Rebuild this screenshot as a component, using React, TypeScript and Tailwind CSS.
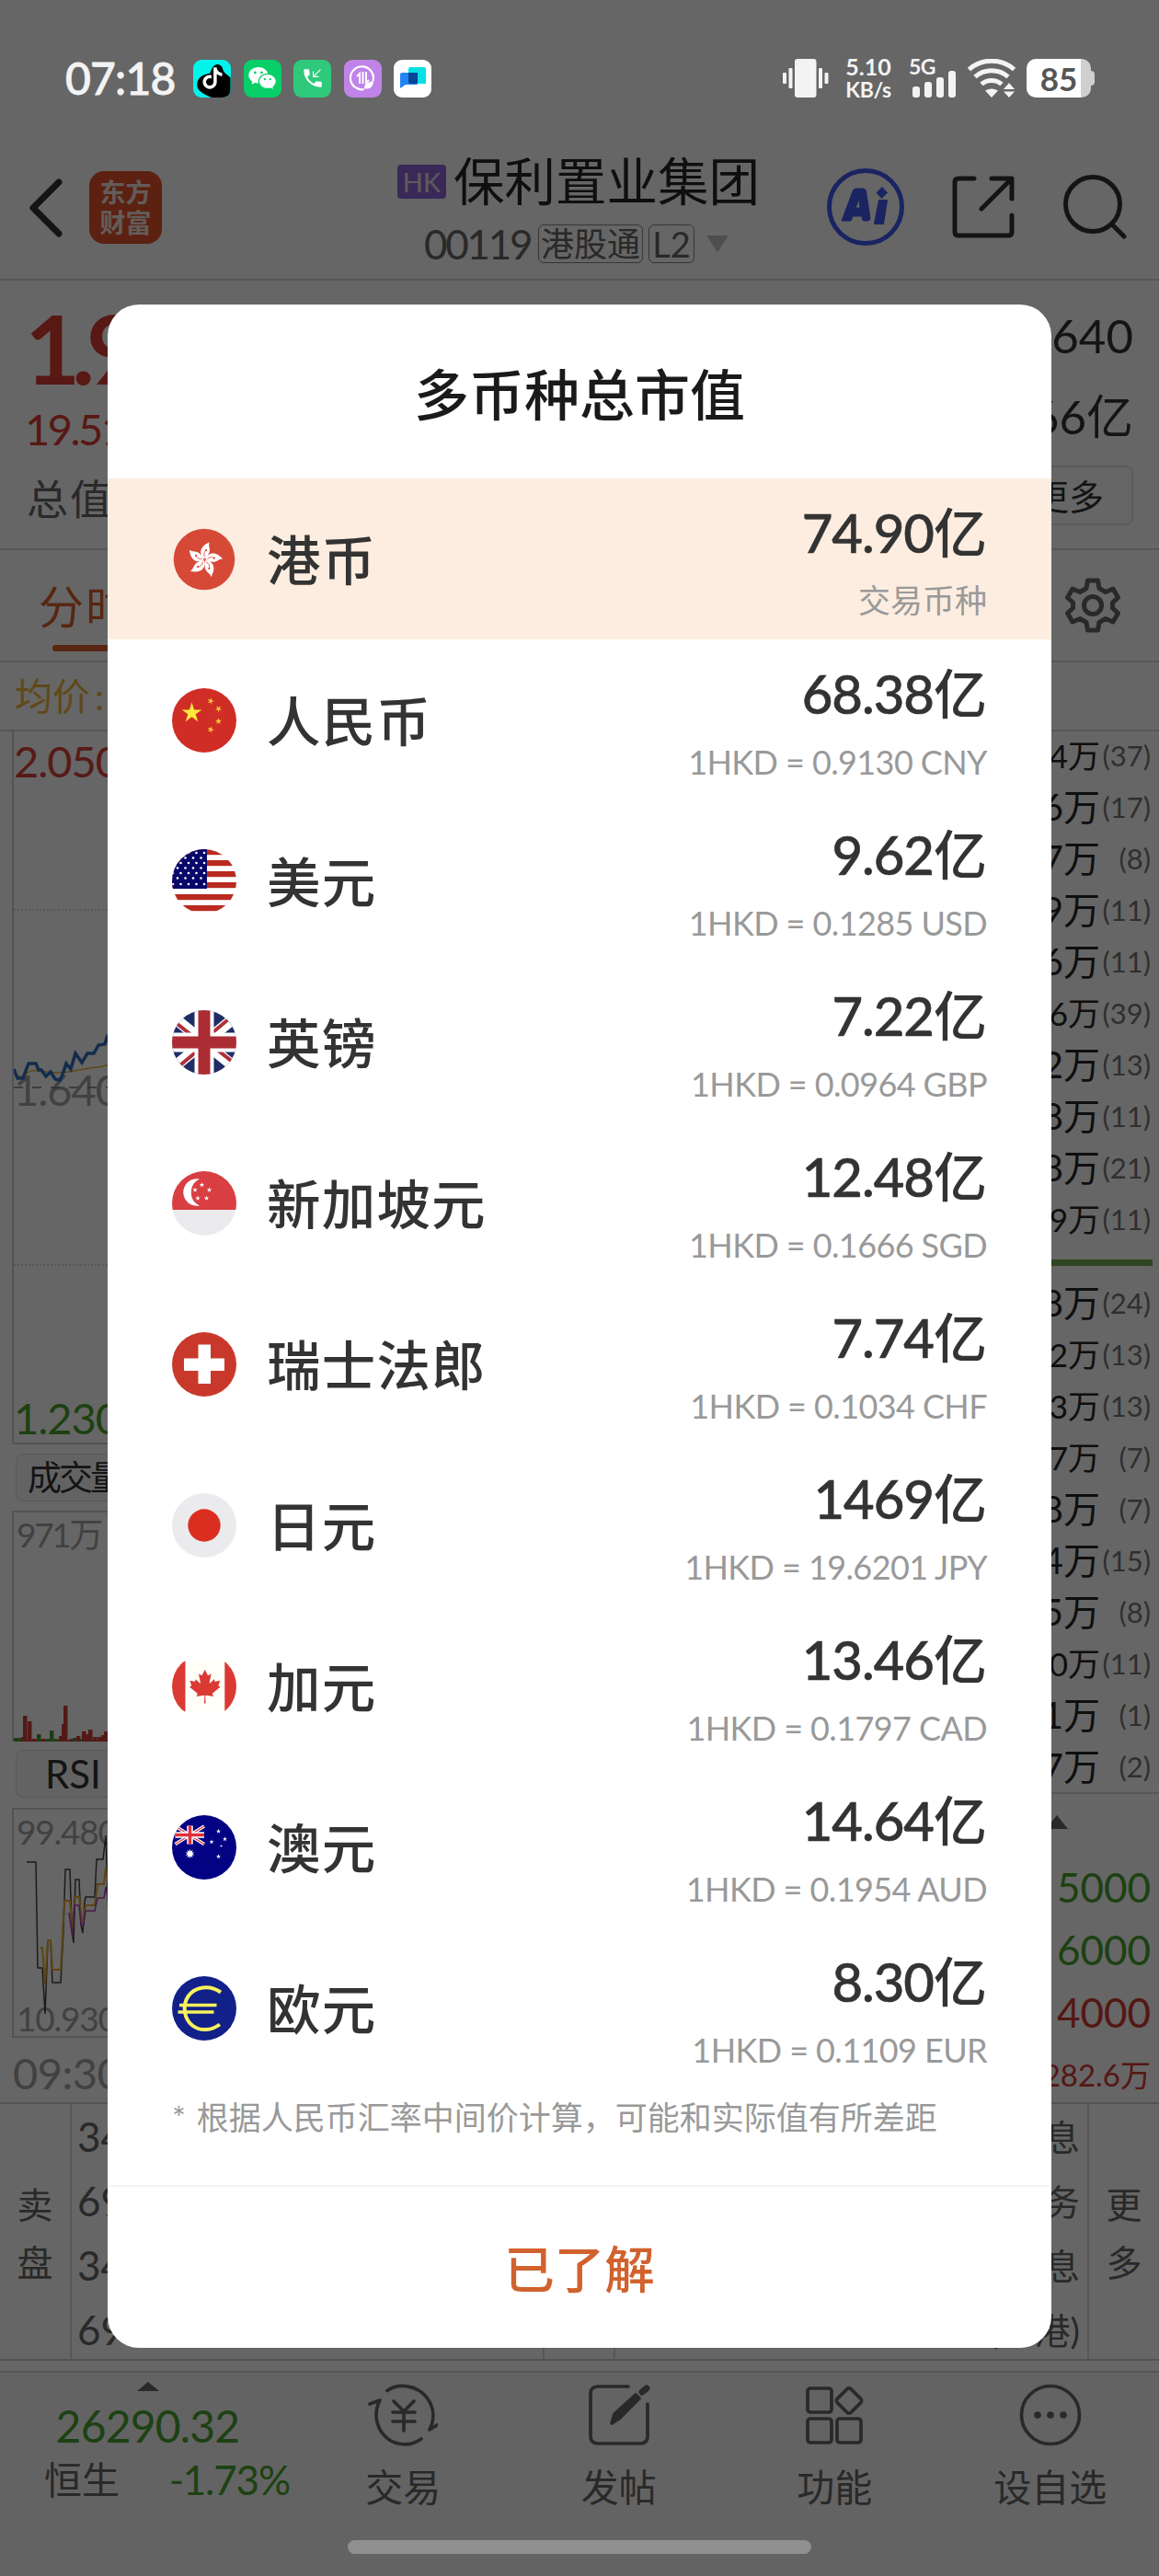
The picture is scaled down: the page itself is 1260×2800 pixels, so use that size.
import type { ReactNode } from "react";
import { RiTiktokFill, RiWechatFill } from "react-icons/ri";
import { MdPhoneCallback } from "react-icons/md";

const STAR = "M0-10 2.25-3.1H9.5L3.63 1.18 5.88 8.1 0 3.8-5.88 8.1-3.63 1.18-9.5-3.1H-2.25Z";

function Star({ x, y, r, rotate = 0, fill = "#fff" }: { x: number; y: number; r: number; rotate?: number; fill?: string }) {
  return <path d={STAR} fill={fill} transform={`translate(${x} ${y}) rotate(${rotate}) scale(${r / 10})`} />;
}

function Flag({ id, children }: { id: string; children: ReactNode }) {
  return (
    <svg viewBox="0 0 70 70" className="size-[70px] shrink-0">
      <clipPath id={`flag-${id}`}>
        <circle cx="35" cy="35" r="35" />
      </clipPath>
      <g clipPath={`url(#flag-${id})`}>{children}</g>
    </svg>
  );
}

function UnionJack() {
  return (
    <>
      <rect width="70" height="70" fill="#1f2d64" />
      <path d="M-2 5 72 65M72 5-2 65" stroke="#fff" strokeWidth="12" />
      <path d="M-2 9 35 38M72 1 35 32M-2 69 35 38M72 61 35 32" stroke="#b0303a" strokeWidth="4" />
      <path d="M35 0V70M0 35H70" stroke="#fff" strokeWidth="21" />
      <path d="M35 0V70M0 35H70" stroke="#ab2c33" strokeWidth="13" />
    </>
  );
}

const flags: Record<string, ReactNode> = {
  HKD: (
    <>
      <circle cx="35" cy="35" r="33.3" fill="#d64937" />
      {[0, 72, 144, 216, 288].map((a) => (
        <g key={a} transform={`translate(35.5 35.5) rotate(${a + 4})`}>
          <path d="M0-1C-7-5-7-14 4-19.500 2-15 7-12 3.500-6 3-3 1-2 0-1Z" fill="#fff" />
          <path d="M0-3C-2-6-1-9 1-11" stroke="#d64937" strokeWidth="0.800" fill="none" />
          <circle cx="0.800" cy="-10.500" r="1.100" fill="#d64937" />
        </g>
      ))}
    </>
  ),
  CNY: (
    <>
      <rect width="70" height="70" fill="#d02d27" />
      <Star x={21.500} y={27} r={11.500} fill="#ffe83b" />
      <Star x={42} y={14} r={3.800} rotate={20} fill="#f9c832" />
      <Star x={50.500} y={22.500} r={3.800} rotate={40} fill="#f9c832" />
      <Star x={50.500} y={36} r={3.800} fill="#f9c832" />
      <Star x={42} y={45} r={3.800} rotate={20} fill="#f9c832" />
    </>
  ),
  USD: (
    <>
      <rect width="70" height="70" fill="#fff" />
      {[0, 12, 24, 36, 49, 61].map((y) => (
        <rect key={y} y={y} width="70" height="6.200" fill="#b92a20" />
      ))}
      <rect width="38" height="43" fill="#08086b" />
      {[4, 9.500, 15, 20.500, 26, 31.500, 38].map((y, i) =>
        [2, 10.500, 19, 27.500, 36].map((x) => (
          <circle key={`${x}-${y}`} cx={x - (i % 2 ? 4.500 : 1)} cy={y} r="1.300" fill="#fff" />
        ))
      )}
    </>
  ),
  GBP: <UnionJack />,
  SGD: (
    <>
      <rect width="70" height="70" fill="#ebebed" />
      <rect width="70" height="42" fill="#d93f42" />
      <path d="M30 8.500A14.800 14.800 0 1 0 30 37.500 16 16 0 0 1 30 8.500Z" fill="#fff" />
      <Star x={32.500} y={15} r={2.900} />
      <Star x={25} y={20.500} r={2.900} />
      <Star x={40.500} y={20.500} r={2.900} />
      <Star x={28} y={29.500} r={2.900} />
      <Star x={37.500} y={29.500} r={2.900} />
    </>
  ),
  CHF: (
    <>
      <rect width="70" height="70" fill="#c9392b" />
      <path d="M28.500 13.500h13.500v15h15v13.500h-15v14h-13.500v-14h-15.500v-13.500h15.500Z" fill="#fff" />
    </>
  ),
  JPY: (
    <>
      <rect width="70" height="70" fill="#ebebee" />
      <circle cx="35" cy="35" r="17.700" fill="#da2f20" />
    </>
  ),
  CAD: (
    <>
      <rect y="7.500" width="70" height="55" fill="#fffff8" />
      <rect y="7.500" width="14.500" height="55" fill="#db3a34" />
      <rect x="57.300" y="7.500" width="13" height="55" fill="#db3a34" />
      <path
        transform="translate(35.800 35) scale(.0091)"
        fill="#db3a34"
        d="m-90 2030 45-863a95 95 0 0 0-111-98l-859 151 116-320a65 65 0 0 0-20-73l-941-762 212-99a65 65 0 0 0 34-79l-186-572 542 115a65 65 0 0 0 73-38l105-247 423 454a65 65 0 0 0 111-57l-204-1052 327 189a65 65 0 0 0 91-27l332-652 332 652a65 65 0 0 0 91 27l327-189-204 1052a65 65 0 0 0 111 57l423-454 105 247a65 65 0 0 0 73 38l542-115-186 572a65 65 0 0 0 34 79l212 99-941 762a65 65 0 0 0-20 73l116 320-859-151a95 95 0 0 0-111 98l45 863z"
      />
    </>
  ),
  AUD: (
    <>
      <rect width="70" height="70" fill="#020283" />
      <path d="M3.500 12 35 31.500M35 12 3.500 31.500" stroke="#fff" strokeWidth="3.600" />
      <path d="M3.500 12 35 31.500M35 12 3.500 31.500" stroke="#e03a3a" strokeWidth="1.400" />
      <path d="M19.500 11.500V31.500M3.500 21.500H35" stroke="#fff" strokeWidth="6.500" />
      <path d="M19.500 11.500V31.500M3.500 21.500H35" stroke="#e0303a" strokeWidth="3.500" />
      <Star x={19.500} y={42} r={5.200} />
      <Star x={19.500} y={42} r={5.200} rotate={36} />
      <Star x={50.500} y={17.500} r={2.700} />
      <Star x={43} y={29} r={2.700} />
      <Star x={57.500} y={26} r={2.700} />
      <Star x={53.500} y={33.500} r={1.600} />
      <Star x={50.500} y={45} r={2.700} />
    </>
  ),
  EUR: (
    <>
      <rect width="70" height="70" fill="#12208a" />
      <path d="M53 17.500C41 9 25 11 17.500 22 11 32 13 46 22 53.500 31 60.500 43 59 52 52.500" stroke="#f8f25c" strokeWidth="4" fill="none" />
      <path d="M8 31.500H48.500M6.500 39H45.500" stroke="#f8f25c" strokeWidth="3.400" />
    </>
  ),
};

const currencies = [
  { code: "HKD", name: "港币", amount: "74.90", note: "交易币种" },
  { code: "CNY", name: "人民币", amount: "68.38", note: "1HKD = 0.9130 CNY" },
  { code: "USD", name: "美元", amount: "9.62", note: "1HKD = 0.1285 USD" },
  { code: "GBP", name: "英镑", amount: "7.22", note: "1HKD = 0.0964 GBP" },
  { code: "SGD", name: "新加坡元", amount: "12.48", note: "1HKD = 0.1666 SGD" },
  { code: "CHF", name: "瑞士法郎", amount: "7.74", note: "1HKD = 0.1034 CHF" },
  { code: "JPY", name: "日元", amount: "1469", note: "1HKD = 19.6201 JPY" },
  { code: "CAD", name: "加元", amount: "13.46", note: "1HKD = 0.1797 CAD" },
  { code: "AUD", name: "澳元", amount: "14.64", note: "1HKD = 0.1954 AUD" },
  { code: "EUR", name: "欧元", amount: "8.30", note: "1HKD = 0.1109 EUR" },
];

type Order = [volume: string, count: string, small?: boolean];

const asks: Order[] = [
  [".4万", "(37)", true],
  ["6万", "(17)"],
  ["7万", "(8)"],
  ["9万", "(11)"],
  ["6万", "(11)"],
  ["6万", "(39)", true],
  ["2万", "(13)"],
  ["8万", "(11)"],
  ["8万", "(21)"],
  ["9万", "(11)", true],
];

const bids: Order[] = [
  ["8万", "(24)"],
  ["2万", "(13)", true],
  [".3万", "(13)", true],
  [".7万", "(7)", true],
  ["8万", "(7)"],
  ["4万", "(15)"],
  ["5万", "(8)"],
  ["0万", "(11)", true],
  ["1万", "(1)"],
  ["7万", "(2)"],
];

// [x, height, up]
const volumeBars: [number, number, boolean][] = [
  [0, 4, false], [4, 4, false], [8, 5, true], [10, 28, true], [15, 22, true],
  [20, 3, true], [25, 8, false], [30, 3, true], [35, 3, false], [39, 12, false],
  [44, 3, false], [49, 6, true], [52, 19, true], [54, 39, true], [60, 3, true],
  [64, 4, false], [68, 6, true], [72, 3, false], [74, 11, true], [78, 8, true],
  [81, 13, true], [86, 5, true], [91, 5, true], [95, 7, true], [98, 11, true],
];

function StatusBar() {
  return (
    <div className="absolute inset-x-0 top-0 flex h-[170px] items-center pl-[71px] text-[#f3f3f3]">
      <span className="w-[139px] text-[48px] font-medium tracking-[-0.800px] [-webkit-text-stroke:0.800px_#f3f3f3]">07:18</span>
      <div className="flex gap-[13.500px]">
        <span className="relative flex size-[41px] items-center justify-center overflow-hidden rounded-[9px] bg-[#00f4ea]">
          <svg viewBox="0 0 41 42" className="absolute inset-0 size-full">
            <path d="M26 5c4 0 6 2 7 7 2 4 6 5 8 8v22H20C8 37 3 33 4 26c1-7 7-10 14-11 2-4 3-9 8-10Z" fill="#000" />
          </svg>
          <RiTiktokFill className="relative size-7 text-white" />
        </span>
        <span className="flex size-[41px] items-center justify-center rounded-[9px] bg-[#08cf68]">
          <RiWechatFill className="size-[32px] text-white" />
        </span>
        <span className="flex size-[41px] items-center justify-center rounded-[9px] bg-[#2fc97c]">
          <MdPhoneCallback className="size-[26px] text-white" />
        </span>
        <span className="flex size-[41px] items-center justify-center rounded-[9px] bg-[#c083e8]">
          <svg viewBox="0 0 28 28" className="size-7" fill="none" stroke="#fff" strokeWidth="2.200">
            <path d="M25.500 17A12.500 12.500 0 1 0 16 26" />
            <path d="M8 12 11 9V20M14.500 7V20M18 7V19L21 16" strokeWidth="2" />
            <path d="M16 25c0-5 4-7 10-8 0 6-4 10-10 8Z" fill="#fff" stroke="none" />
          </svg>
        </span>
        <span className="flex size-[41px] items-center justify-center rounded-[9px] bg-white">
          <svg viewBox="0 0 28 24" className="size-7">
            <path d="M11 0H26a2 2 0 0 1 2 2V18H11a2 2 0 0 1-2-2V2a2 2 0 0 1 2-2Z" fill="#05e0e4" />
            <path d="M2 6H19V18a1 1 0 0 1-1 1H6L0 23V8a2 2 0 0 1 2-2Z" fill="#2384f5" />
            <path d="M9 6H19V16a2 2 0 0 1-2 2H11a2 2 0 0 1-2-2Z" fill="#074597" />
          </svg>
        </span>
      </div>

      <svg viewBox="0 0 50 42" className="ml-[382px] h-[42px] w-[50px]" fill="#f3f3f3">
        <rect x="13" width="23.500" height="42" rx="3" />
        <rect y="15" width="4" height="12" rx="1" />
        <rect x="6.500" y="10" width="4" height="22" rx="1" />
        <rect x="39" y="10" width="4" height="22" rx="1" />
        <rect x="45.500" y="15" width="4" height="12" rx="1" />
      </svg>
      <div className="ml-[17px] flex w-[52px] flex-col items-center text-[25px] leading-[25px] font-bold">
        <span>5.10</span>
        <span className="text-[23px] tracking-[-0.300px]">KB/s</span>
      </div>
      <div className="relative ml-[19px] h-[42px] w-[50px]">
        <span className="absolute top-[-3px] left-[-1px] text-[23px] font-bold tracking-[-0.500px]">5G</span>
        <svg viewBox="0 0 50 42" className="size-full" fill="#f3f3f3">
          <rect x="3" y="30" width="8" height="12" rx="3" />
          <rect x="16" y="25" width="8" height="17" rx="3" />
          <rect x="29" y="20" width="8" height="22" rx="3" />
          <rect x="42" y="13" width="8" height="29" rx="3" />
        </svg>
      </div>
      <svg viewBox="0 0 52 42" className="ml-[13px] h-[42px] w-[52px]" fill="none" stroke="#f3f3f3" strokeWidth="5">
        <path d="M1.500 11.500C15-1 37-1 50.500 11.500" />
        <path d="M8 19.500C18 10.500 34 10.500 44 19.500" />
        <path d="M15 27.500C21 22 31 22 37 27.500" />
        <path d="M19 34.500Q26 30.500 33 34.500L26 42Z" fill="#f3f3f3" stroke="none" />
        <path d="M39 33 45 26 51 33ZM39 35.500H51L45 42Z" fill="#f3f3f3" stroke="none" />
      </svg>
      <div className="ml-[12px] flex items-center">
        <div className="flex h-[42px] w-[70px] items-center justify-center rounded-[10px] bg-[linear-gradient(90deg,#fff_84%,#d0d0d0_84%)] text-[35px] font-bold text-[#555]">
          85
        </div>
        <span className="h-4 w-1 rounded-r-sm bg-[#d0d0d0]" />
      </div>
    </div>
  );
}

function Header() {
  return (
    <div className="flex h-[305px] items-start border-b-2 border-[#d9d9d9] pt-[170px] text-[#333]">
      <svg viewBox="0 0 36 64" className="mt-[24px] ml-[32px] h-16 w-9" fill="none" stroke="#333" strokeWidth="7" strokeLinecap="round" strokeLinejoin="round">
        <path d="M32 4 4 32 32 60" />
      </svg>
      <div className="mt-[16px] ml-[29px] flex size-[79px] flex-col items-center justify-center rounded-[16px] bg-[#e65428] text-[28px] leading-[33px] font-bold text-[#f6e6e0]">
        <span>东方</span>
        <span>财富</span>
      </div>
      <div className="ml-[206px] flex w-[444px] flex-col items-center">
        <div className="flex h-[54px] items-center gap-[8px] self-start pl-[50px]">
          <span className="flex h-[37px] w-[53px] items-center justify-center rounded bg-[#9266dc] text-[29px] text-[#e6e6e6]">HK</span>
          <span className="text-[55.500px] whitespace-nowrap text-[#262626]">保利置业集团</span>
        </div>
        <div className="mt-[19px] flex h-[43px] items-center self-start pl-[79px] text-[#666]">
          <span className="w-[124px] text-[44px] tracking-[-2.300px]">00119</span>
          <span className="flex h-[42px] w-[114px] items-center justify-center rounded-md border-[1.500px] border-[#888] text-[36px]">港股通</span>
          <span className="ml-[6px] flex h-[42px] w-[50px] items-center justify-center rounded-md border-[1.500px] border-[#888] text-[38px]">L2</span>
          <svg viewBox="0 0 26 18" className="ml-[12px] h-[18px] w-[26px]">
            <path d="M1 0H25L13 18Z" fill="#c4c4c4" />
          </svg>
        </div>
      </div>
      <svg viewBox="0 0 84 84" className="mt-[13px] ml-[73px] size-[84px]">
        <circle cx="42" cy="42" r="39.500" fill="none" stroke="#425bf2" strokeWidth="5" />
        <path d="M16 57 28 25Q29 22 32 22H39Q42 22 42.500 25L47 54Q47 57 44 57H40Q38 57 38 52H28L26 57ZM31 43H36L35 33Z" fill="#425bf2" stroke="#425bf2" strokeLinejoin="round" />
        <path d="M57 35H65L61 60H52Z" fill="#425bf2" stroke="#425bf2" strokeWidth="2" strokeLinejoin="round" />
        <path d="M60 20 66 26.500 59.500 33 53.500 26.500Z" fill="#425bf2" />
      </svg>
      <svg viewBox="0 0 68 68" className="mt-[21px] ml-[52px] size-[68px]" fill="none" stroke="#333" strokeWidth="5" strokeLinecap="round" strokeLinejoin="round">
        <path d="M24 3H7Q3 3 3 7V61Q3 65 7 65H61Q65 65 65 61V43M65 25V3H43M64 4 32 36" />
      </svg>
      <svg viewBox="0 0 70 70" className="mt-[20px] ml-[53px] size-[70px]" fill="none" stroke="#333" strokeWidth="5" strokeLinecap="round">
        <circle cx="32" cy="32" r="29.500" />
        <path d="M53 54 66 67" />
      </svg>
    </div>
  );
}

function Quote() {
  return (
    <>
      <div className="flex h-[293px] justify-between border-b-2 border-[#d9d9d9] pr-[28px] pl-[27px]">
        <div className="flex flex-col">
          <span className="mt-[20px] flex h-[106px] items-center text-[104px] font-bold tracking-[-9px] text-[#dc3c34]">1.960</span>
          <span className="mt-[10px] flex h-[50px] items-center text-[47px] tracking-[-2.500px] text-[#dc3c34]">19.51%</span>
          <span className="mt-[27px] flex h-[50px] items-center pl-[2px] text-[45px] tracking-[2px] text-[#666]">总值</span>
        </div>
        <div className="flex flex-col items-end text-[51px] text-[#333]">
          <span className="mt-[34px] flex h-[50px] items-center">1.640</span>
          <span className="mt-[38px] flex h-[50px] items-center">3.66亿</span>
          <span className="mt-[29px] flex h-[65px] w-[140px] items-center justify-end rounded-lg border-2 border-[#e4e4e4] pr-[30px] text-[38px]">
            更多
          </span>
        </div>
      </div>
      <div className="flex h-[122px] items-center justify-between border-b-2 border-[#d9d9d9] pr-[42px] pl-[42px]">
        <div className="relative mt-[2px] text-[49px] tracking-[2px] text-[#dc602c]">
          分时
          <span className="absolute top-[66px] left-[15px] h-[7px] w-[72px] rounded-full bg-[#dc602c]" />
        </div>
        <svg viewBox="0 0 60 60" className="size-[60px]" fill="none" stroke="#666" strokeWidth="5" strokeLinejoin="round">
          <path d="M24.500 3H35.500L37 11.500 44 15.500 52 12 57.500 21.500 51.500 27V33L57.500 38.500 52 48 44 44.500 37 48.500 35.500 57H24.500L23 48.500 16 44.500 8 48 2.500 38.500 8.500 33V27L2.500 21.500 8 12 16 15.500 23 11.500Z" />
          <circle cx="30" cy="30" r="9.500" />
        </svg>
      </div>
      <div className="flex h-[75px] items-center border-b-2 border-[#d9d9d9] pl-[16px] text-[41px] text-[#f0b43c]">
        均价<span className="ml-[5px]">: 1.905</span>
      </div>
    </>
  );
}

function Charts() {
  return (
    <div className="w-[830px] pl-[13px]">
      <div className="relative flex h-[775px] flex-col justify-between border-b-2 border-l-2 border-[#cfcfcf] pt-[9px] pb-[3px] text-[47px] tracking-[-1px]">
        <svg viewBox="0 0 110 775" className="absolute top-0 left-0 h-[775px] w-[110px]" fill="none">
          <path d="M0 194H110M0 580H110" stroke="#aaa" strokeDasharray="2 2" />
          <path d="M0 387H110" stroke="#777" strokeWidth="1.500" strokeDasharray="10 10" />
          <path d="M3 373C8 378 14 372 18 369 30 368 40 372 50 371 70 370 78 365 92 365L110 361" stroke="#f0b43c" strokeWidth="1.500" />
          <path d="M0 367 4 377H10L16 361H24L27 368H30L35 375 40 370 45 378 50 379 53 373 57 361 62 367 67 350 74 360 80 350H87L92 341 99 340 101 333 104 339H110" stroke="#336fbc" strokeWidth="3.500" />
        </svg>
        <span className="text-[#dc423a]">2.050</span>
        <span className="text-[#a3a3a3]">1.640</span>
        <span className="text-[#4aa42f]">1.230</span>
      </div>
      <div className="mt-[10px] ml-[4px] flex h-[52px] w-[150px] items-center rounded-lg border border-[#dcdcdc] bg-[#f7f7f7] pb-[2px] pl-[12px] text-[37px] tracking-[-3px] text-[#333]">
        成交量
      </div>
      <div className="relative mt-[10px] h-[251px] border-t-2 border-l-2 border-[#cfcfcf] pt-[5px] pl-[3px] text-[37px] tracking-[-2.300px] text-[#a3a3a3]">
        971万
        <svg viewBox="0 0 110 250" className="absolute bottom-0 left-0 h-[250px] w-[110px]">
          <rect y="248.500" width="110" height="1.500" fill="#c33a33" />
          {volumeBars.map(([x, h, up]) => (
            <rect key={x} x={x} y={250 - h} width="4.500" height={h} fill={up ? "#cf4038" : "#4a9a38"} />
          ))}
        </svg>
      </div>
      <div className="mt-[9px] ml-[4px] flex h-[52px] w-[150px] items-center rounded-lg border border-[#dcdcdc] bg-[#f7f7f7] pl-[31px] text-[42px] text-[#333]">
        RSI
      </div>
      <div className="relative mt-[11px] flex h-[250px] flex-col justify-between border-y-2 border-l-2 border-[#cfcfcf] pt-[5px] pb-px pl-[3px] text-[37px] tracking-[-1.200px] text-[#a3a3a3]">
        <svg viewBox="0 0 110 250" className="absolute top-0 left-0 h-[250px] w-[110px]" fill="none" strokeWidth="1.500">
          <path d="M14 57H24L26 172H31L34 222 37 142H40L42 188H51L54 130 56 65H61L63 130 65 145 67 76H71L73 125 75 134 77 100 78 95H88L90 54H97L100 28 103 118V40" stroke="#444" />
          <path d="M29 150H31L34 190 37 142H40L42 174H51L55 99H61L64 130 66 95H71L74 122H75L78 104H88L91 81H98L100 63 104 87V70" stroke="#e6aa35" strokeWidth="2" />
          <path d="M60 112 64 140 66 104H71L73 125H76L78 110H88L91 96H98L100 84 104 105V90" stroke="#b03cc0" />
        </svg>
        <span>99.480</span>
        <span>10.930</span>
      </div>
      <div className="flex h-[71px] items-center pt-[6px] pl-px text-[47px] tracking-[-0.500px] text-[#a3a3a3]">09:30</div>
    </div>
  );
}

function OrderRows({ rows }: { rows: Order[] }) {
  return (
    <>
      {rows.map(([volume, count, small], i) => (
        <div key={i} className="flex h-[56px] shrink-0 items-center justify-end">
          <span className={small ? "text-[35px]" : "text-[40px]"}>{volume}</span>
          <span className="w-[55px] text-right text-[31px] text-[#777]">{count}</span>
        </div>
      ))}
    </>
  );
}

function OrderBook() {
  return (
    <div className="-mt-[2px] flex flex-1 flex-col pr-[9px] text-right text-[#262626]">
      <OrderRows rows={asks} />
      <div className="mt-[16px] -mr-[2px] mb-[12px] h-[7px] shrink-0 bg-[#70ad50]" />
      <OrderRows rows={bids} />
      <div className="-mr-[9px] flex h-[69px] shrink-0 items-center border-t-2 border-[#d9d9d9] pl-[307px]">
        <svg viewBox="0 0 24 15" className="mt-[-7px] h-[15px] w-6">
          <path d="M0 15 12 0 24 15Z" fill="#666" />
        </svg>
      </div>
      <div className="flex flex-col text-[44px] leading-[68px]">
        <span className="text-[#4aa42f]">5000</span>
        <span className="text-[#4aa42f]">6000</span>
        <span className="text-[#d43a33]">4000</span>
        <span className="text-[33px] text-[#d43a33]">282.6万</span>
      </div>
    </div>
  );
}

function Brokers() {
  return (
    <div className="flex h-[281px] border-y-2 border-[#d0d0d0] text-[39px] text-[#666]">
      <div className="flex w-[78px] flex-col items-center justify-center gap-[24px] border-r-2 border-[#d9d9d9] pt-[5px]">
        <span>卖</span>
        <span>盘</span>
      </div>
      <div className="flex w-[514px] flex-col border-r-2 border-[#d9d9d9] pl-[6px] text-[44px] leading-[70px]">
        <span>3436</span>
        <span>6998</span>
        <span>3436</span>
        <span>6998</span>
      </div>
      <div className="w-[77px] border-r-2 border-[#d9d9d9]" />
      <div className="flex w-[515px] flex-col items-end border-r-2 border-[#d9d9d9] pt-px pr-[8px] leading-[70px]">
        <span>信息</span>
        <span>服务</span>
        <span>信息</span>
        <span>(香港)</span>
      </div>
      <div className="flex flex-1 flex-col items-center justify-center gap-[24px] pt-[5px]">
        <span>更</span>
        <span>多</span>
      </div>
    </div>
  );
}

const tabs: { label: string; icon: ReactNode }[] = [
  {
    label: "交易",
    icon: (
      <>
        <path d="M21 7.500C33-1 53 1 64 15 73 27 72 40 67 50L75 45M58 60C44 70 25 67 15 53 8 42 7 30 13 18L2 22" />
        <path d="M28 19 39 30 50 19M39 30V51M27 31H51M27 41H51" />
      </>
    ),
  },
  {
    label: "发帖",
    icon: (
      <>
        <path d="M48 3H15Q7 3 7 11V57Q7 65 15 65H61Q69 65 69 57V22" />
        <path d="M30 43 33 33 56 12 60 16 38 38Z" fill="#666" />
        <path d="M63 9 68 5" strokeWidth="7" />
      </>
    ),
  },
  {
    label: "功能",
    icon: (
      <>
        <rect x="9" y="5" width="26" height="26" rx="3" />
        <rect x="9" y="38" width="26" height="26" rx="3" />
        <rect x="41" y="38" width="26" height="26" rx="3" />
        <rect x="43.500" y="8" width="21" height="21" rx="3" transform="rotate(45 54 18.500)" />
      </>
    ),
  },
  {
    label: "设自选",
    icon: (
      <>
        <circle cx="38" cy="34" r="31.500" />
        <g fill="#666" stroke="none">
          <circle cx="24" cy="34" r="3.800" />
          <circle cx="38" cy="34" r="3.800" />
          <circle cx="52" cy="34" r="3.800" />
        </g>
      </>
    ),
  },
];

function BottomBar() {
  return (
    <div className="mt-[11px] flex h-[223px] border-t-2 border-[#d4d4d4] bg-[#f7f7f7] text-[41px] text-[#666]">
      <div className="flex w-[321px] flex-col items-center">
        <svg viewBox="0 0 24 10" className="mt-[10px] h-[10px] w-6">
          <path d="M0 10 12 0 24 10Z" fill="#666" />
        </svg>
        <span className="mt-[13px] flex h-[50px] items-center text-[48px] tracking-[-0.800px] text-[#4aa42f]">26290.32</span>
        <div className="mt-[8px] flex h-[50px] w-full items-center justify-between pr-[6px] pl-[48px]">
          <span>恒生</span>
          <span className="text-[44px] tracking-[-1.200px] text-[#4aa42f]">-1.73%</span>
        </div>
      </div>
      {tabs.map((tab) => (
        <div key={tab.label} className="flex w-[234.500px] flex-col items-center">
          <svg viewBox="0 0 76 68" className="mt-[12px] h-[68px] w-[76px]" fill="none" stroke="#666" strokeWidth="3.700" strokeLinecap="round" strokeLinejoin="round">
            {tab.icon}
          </svg>
          <span className="mt-[19px] flex h-[50px] items-center">{tab.label}</span>
        </div>
      ))}
    </div>
  );
}

function CurrencyDialog() {
  return (
    <div className="absolute top-[331px] left-[117px] flex w-[1026px] flex-col overflow-hidden rounded-[34px] bg-white">
      <h2 className="flex h-[189px] items-center justify-center pt-[6px] text-[60px] font-medium text-[#1a1a1a]">多币种总市值</h2>
      {currencies.map((c) => (
        <div key={c.code} className="flex h-[175px] items-center px-[70px] first-of-type:bg-[#fcede0]">
          <Flag id={c.code}>{flags[c.code]}</Flag>
          <span className="ml-[33px] pt-[2px] text-[58.500px] font-medium tracking-[1.200px] text-[#333]">{c.name}</span>
          <div className="ml-auto flex flex-col items-end pt-[10px]">
            <span className="flex h-[64px] items-center text-[58px] font-medium text-[#333]">
              <span className="tracking-[-1px] [-webkit-text-stroke:0.600px_#333]">{c.amount}</span>亿
            </span>
            <span className={`mt-[16px] flex h-[52px] items-center text-[#999] ${c.code === "HKD" ? "text-[35px]" : "text-[36px] tracking-[-0.600px]"}`}>
              {c.note}
            </span>
          </div>
        </div>
      ))}
      <p className="flex h-[107px] items-start border-b-2 border-[#f3f3f3] pt-[14px] pl-[70px] text-[35px] text-[#999] [word-spacing:3px]">
        * 根据人民币汇率中间价计算，可能和实际值有所差距
      </p>
      <button className="h-[175px] pt-[4px] text-[54.500px] font-medium text-[#d1622d]">已了解</button>
    </div>
  );
}

export default function App() {
  return (
    <div className="relative h-[2800px] w-[1260px] overflow-hidden bg-white font-['Lato','Noto_Sans_CJK_SC',sans-serif] leading-none">
      <Header />
      <Quote />
      <div className="flex h-[1490px]">
        <Charts />
        <OrderBook />
      </div>
      <Brokers />
      <BottomBar />
      <div className="absolute inset-0 bg-black/60" />
      <StatusBar />
      <CurrencyDialog />
      <div className="absolute top-[2761px] left-[378px] h-[15px] w-[504px] rounded-full bg-[#909090]" />
    </div>
  );
}
